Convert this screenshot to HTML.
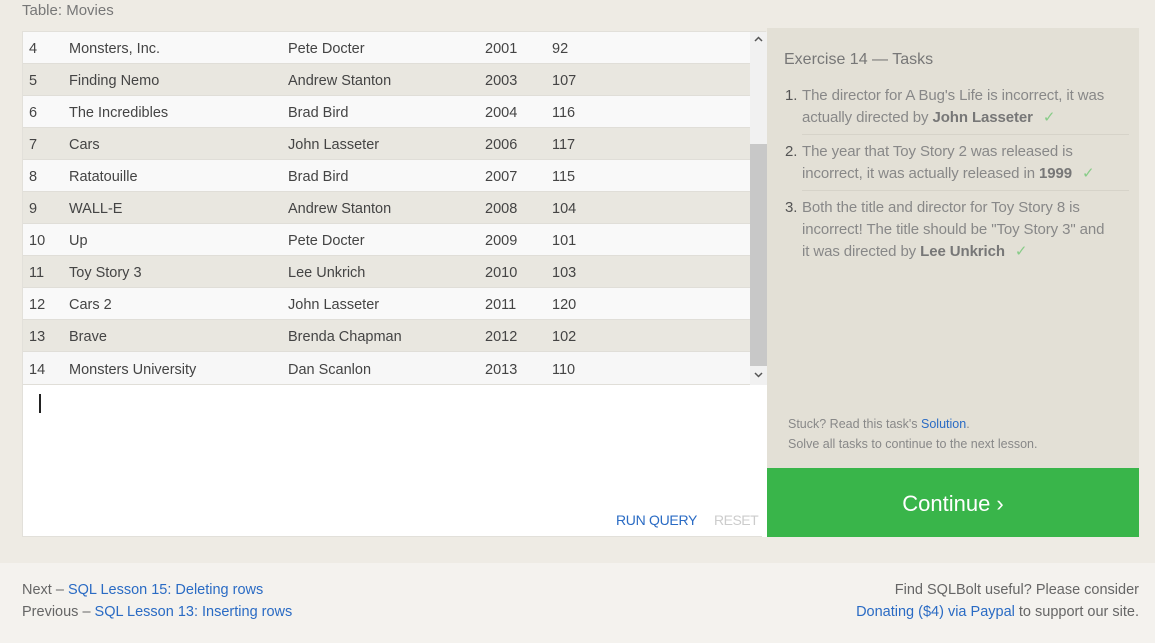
<!DOCTYPE html><html><head><style>
body{margin:0;width:1155px;height:643px;background:#eeebe4;font-family:"Liberation Sans",sans-serif;position:relative;overflow:hidden;color:#555}
.t{position:absolute;left:22px;top:2px;font-size:15px;color:#777}
.left{position:absolute;left:22px;top:31px;width:744px;height:506px;background:#fff;border:1px solid #e2e0da;box-sizing:border-box}
.row{position:absolute;left:0;width:727px;height:32px;font-size:14.5px;color:#444;border-bottom:1px solid #e0ded8;box-sizing:border-box}
.row span{position:absolute;top:9px}
.sb{position:absolute;left:727px;top:0;width:17px;height:353px;background:#f1f1f1}
.th{position:absolute;left:727px;top:112px;width:17px;height:222px;background:#c8c8c8}
.right{position:absolute;left:767px;top:28px;width:372px;height:440px;background:#e3e0d6}
.green{position:absolute;left:767px;top:468px;width:372px;height:69px;background:#39b54a;color:#fff;font-size:22px;text-align:center;line-height:72px}
.foot{position:absolute;left:0;top:563px;width:1155px;height:80px;background:#f4f2ee;font-size:14.5px;color:#666}
a{color:#2a6bc4;text-decoration:none}
ol{margin:0;padding:0;list-style:none}
li{position:relative;margin-left:35px;padding:0 0 5px 0;margin-bottom:6px;font-size:15px;line-height:22px;color:#888;letter-spacing:-0.1px}
li b{color:#777}
li .n{position:absolute;left:-17px;color:#555}
.ck{color:#8c8;margin-left:10px}
</style></head><body>
<div class="t">Table: Movies</div>
<div class="left">
<div class="row" style="top:0;background:#f9f9f9"><span style="left:6px">4</span><span style="left:46px">Monsters, Inc.</span><span style="left:265px">Pete Docter</span><span style="left:462px">2001</span><span style="left:529px">92</span></div>
<div class="row" style="top:32px;background:#e9e7e0"><span style="left:6px">5</span><span style="left:46px">Finding Nemo</span><span style="left:265px">Andrew Stanton</span><span style="left:462px">2003</span><span style="left:529px">107</span></div>
<div class="row" style="top:64px;background:#f9f9f9"><span style="left:6px">6</span><span style="left:46px">The Incredibles</span><span style="left:265px">Brad Bird</span><span style="left:462px">2004</span><span style="left:529px">116</span></div>
<div class="row" style="top:96px;background:#e9e7e0"><span style="left:6px">7</span><span style="left:46px">Cars</span><span style="left:265px">John Lasseter</span><span style="left:462px">2006</span><span style="left:529px">117</span></div>
<div class="row" style="top:128px;background:#f9f9f9"><span style="left:6px">8</span><span style="left:46px">Ratatouille</span><span style="left:265px">Brad Bird</span><span style="left:462px">2007</span><span style="left:529px">115</span></div>
<div class="row" style="top:160px;background:#e9e7e0"><span style="left:6px">9</span><span style="left:46px">WALL-E</span><span style="left:265px">Andrew Stanton</span><span style="left:462px">2008</span><span style="left:529px">104</span></div>
<div class="row" style="top:192px;background:#f9f9f9"><span style="left:6px">10</span><span style="left:46px">Up</span><span style="left:265px">Pete Docter</span><span style="left:462px">2009</span><span style="left:529px">101</span></div>
<div class="row" style="top:224px;background:#e9e7e0"><span style="left:6px">11</span><span style="left:46px">Toy Story 3</span><span style="left:265px">Lee Unkrich</span><span style="left:462px">2010</span><span style="left:529px">103</span></div>
<div class="row" style="top:256px;background:#f9f9f9"><span style="left:6px">12</span><span style="left:46px">Cars 2</span><span style="left:265px">John Lasseter</span><span style="left:462px">2011</span><span style="left:529px">120</span></div>
<div class="row" style="top:288px;background:#e9e7e0"><span style="left:6px">13</span><span style="left:46px">Brave</span><span style="left:265px">Brenda Chapman</span><span style="left:462px">2012</span><span style="left:529px">102</span></div>
<div class="row" style="top:320px;height:33px;background:#f7f7f7"><span style="left:6px;top:10px">14</span><span style="left:46px;top:10px">Monsters University</span><span style="left:265px;top:10px">Dan Scanlon</span><span style="left:462px;top:10px">2013</span><span style="left:529px;top:10px">110</span></div>
<div class="sb"></div><div class="th"></div>
<svg style="position:absolute;left:731px;top:4px" width="9" height="6"><path d="M1 5L4.5 1.5L8 5" fill="none" stroke="#555" stroke-width="1.5"/></svg>
<svg style="position:absolute;left:731px;top:340px" width="9" height="6"><path d="M1 1L4.5 4.5L8 1" fill="none" stroke="#555" stroke-width="1.5"/></svg>
<div style="position:absolute;left:739px;top:353px;width:5px;height:152px;background:#fff"></div>
<div style="position:absolute;left:16px;top:362px;width:2px;height:19px;background:#222"></div>
<div style="position:absolute;left:593px;top:480px;font-size:14px;color:#2a6bc4;letter-spacing:-0.3px">RUN QUERY</div>
<div style="position:absolute;left:691px;top:480px;font-size:14px;color:#ccc;letter-spacing:-0.5px">RESET</div>
</div>
<div class="right">
<div style="position:absolute;left:17px;top:23px;font-size:16px;color:#777">Exercise 14 — Tasks</div>
<ol style="position:absolute;left:0;top:57px;width:362px">
<li style="border-bottom:1px solid #d6d3c9"><span class="n">1.</span>The director for A Bug's Life is incorrect, it was actually directed by <b>John Lasseter</b><span class="ck">✓</span></li>
<li style="border-bottom:1px solid #d6d3c9"><span class="n">2.</span>The year that Toy Story 2 was released is incorrect, it was actually released in <b>1999</b><span class="ck">✓</span></li>
<li><span class="n">3.</span>Both the title and director for Toy Story 8 is incorrect! The title should be "Toy Story 3" and<br>it was directed by <b>Lee Unkrich</b><span class="ck">✓</span></li>
</ol>
<div style="position:absolute;left:21px;top:386px;font-size:12.5px;color:#888;line-height:20px">Stuck? Read this task's <a href="#">Solution</a>.<br>Solve all tasks to continue to the next lesson.</div>
</div>
<div class="green">Continue ›</div>
<div class="foot">
<div style="position:absolute;left:22px;top:16px;line-height:22px">Next – <a href="#">SQL Lesson 15: Deleting rows</a><br>Previous – <a href="#">SQL Lesson 13: Inserting rows</a></div>
<div style="position:absolute;right:16px;top:16px;line-height:22px;text-align:right">Find SQLBolt useful? Please consider<br><a href="#">Donating ($4) via Paypal</a> to support our site.</div>
</div>
</body></html>
